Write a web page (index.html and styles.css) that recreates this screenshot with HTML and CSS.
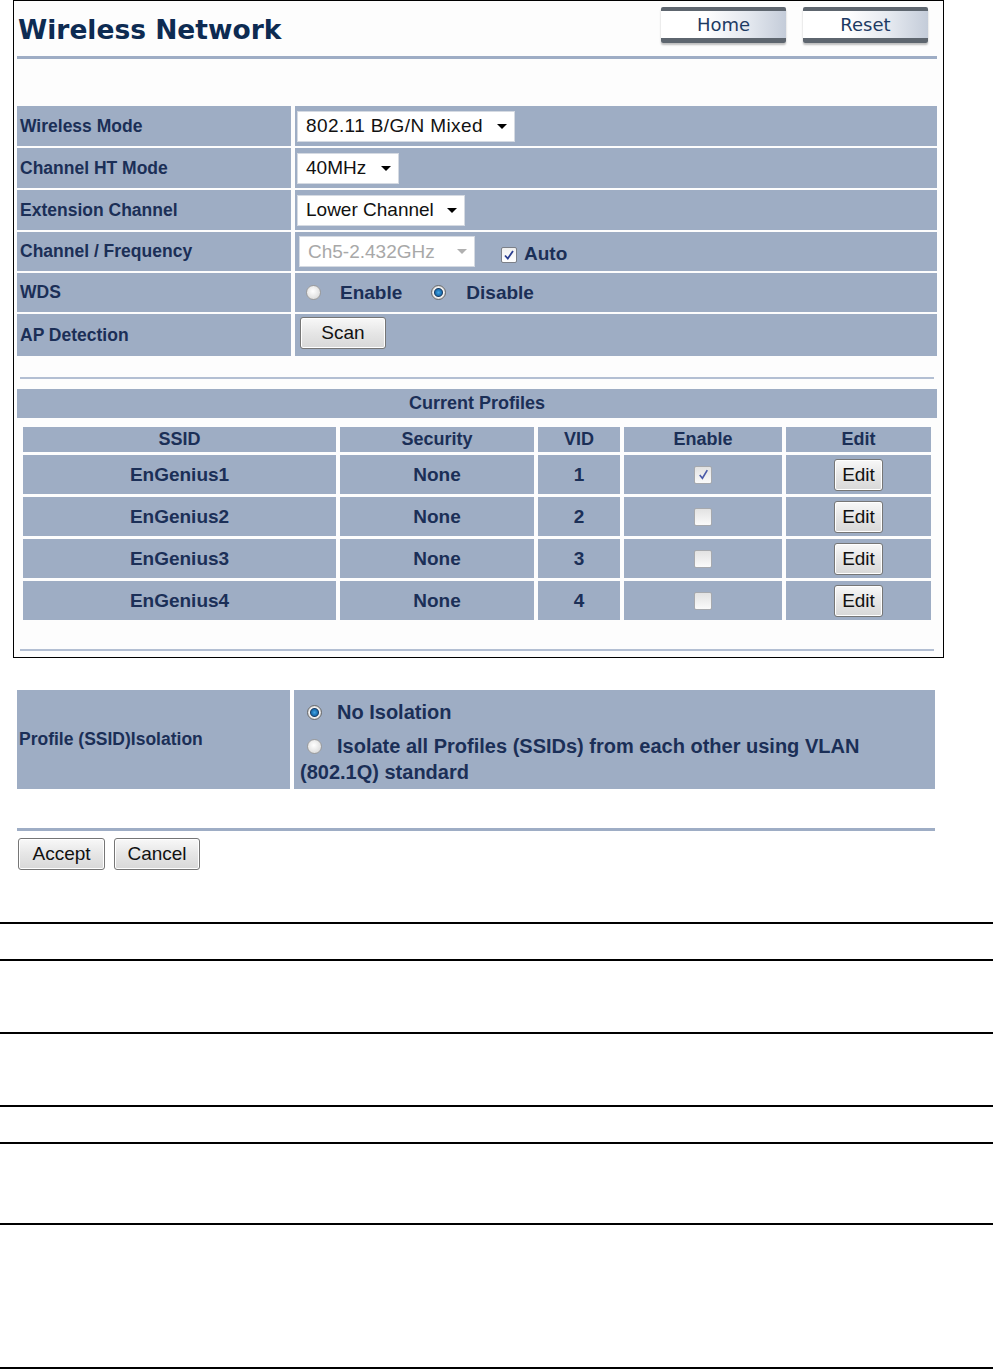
FILE: index.html
```html
<!DOCTYPE html>
<html lang="en">
<head>
  <meta charset="UTF-8">
  <title>Wireless Network</title>
  <link rel="stylesheet" href="styles.css">
</head>
<body>
  <div class="panel">
    <div class="panel-head">
      <h1>Wireless Network</h1>
      <div class="nav-btns">
        <a class="nav-btn" href="#">Home</a>
        <a class="nav-btn" href="#">Reset</a>
      </div>
    </div>
    <div class="blue-line"></div>

    <div class="form-grid">
      <div class="lbl">Wireless Mode</div>
      <div class="val"><span class="select sel-mode">802.11 B/G/N Mixed<i class="caret"></i></span></div>

      <div class="lbl">Channel HT Mode</div>
      <div class="val"><span class="select sel-ht">40MHz<i class="caret"></i></span></div>

      <div class="lbl">Extension Channel</div>
      <div class="val"><span class="select sel-ext">Lower Channel<i class="caret"></i></span></div>

      <div class="lbl">Channel / Frequency</div>
      <div class="val">
        <span class="select sel-freq disabled">Ch5-2.432GHz<i class="caret"></i></span>
        <span class="check small on"><svg width="12" height="12" viewBox="0 0 12 12"><path d="M2 6.5 L4.8 9.5 L10 2" fill="none" stroke="#2a3d8f" stroke-width="1.8"/></svg></span>
        <b class="opt auto">Auto</b>
      </div>

      <div class="lbl">WDS</div>
      <div class="val">
        <span class="radio wds-first"></span><b class="opt">Enable</b>
        <span class="radio on wds-second"></span><b class="opt">Disable</b>
      </div>

      <div class="lbl">AP Detection</div>
      <div class="val"><button type="button" class="btn scan-btn">Scan</button></div>
    </div>

    <div class="thin-line"></div>
    <div class="profiles-title">Current Profiles</div>

    <div class="profiles">
      <div class="th">SSID</div><div class="th">Security</div><div class="th">VID</div><div class="th">Enable</div><div class="th">Edit</div>

      <div class="td">EnGenius1</div><div class="td">None</div><div class="td">1</div>
      <div class="td"><span class="check on"><svg width="13" height="13" viewBox="0 0 12 12"><path d="M2.5 6.5 L5 9.5 L9.5 2" fill="none" stroke="#4a5aa8" stroke-width="1.5"/></svg></span></div>
      <div class="td"><button type="button" class="btn edit-btn">Edit</button></div>

      <div class="td">EnGenius2</div><div class="td">None</div><div class="td">2</div>
      <div class="td"><span class="check"></span></div>
      <div class="td"><button type="button" class="btn edit-btn">Edit</button></div>

      <div class="td">EnGenius3</div><div class="td">None</div><div class="td">3</div>
      <div class="td"><span class="check"></span></div>
      <div class="td"><button type="button" class="btn edit-btn">Edit</button></div>

      <div class="td">EnGenius4</div><div class="td">None</div><div class="td">4</div>
      <div class="td"><span class="check"></span></div>
      <div class="td"><button type="button" class="btn edit-btn">Edit</button></div>
    </div>

    <div class="thin-line bottom"></div>
  </div>

  <div class="iso-section">
    <div class="iso-grid">
      <div class="lbl">Profile (SSID)Isolation</div>
      <div class="val iso-val">
        <div class="iso-item"><span class="radio on"></span>No Isolation</div>
        <div class="iso-item"><span class="radio"></span>Isolate all Profiles (SSIDs) from each other using VLAN (802.1Q) standard</div>
      </div>
    </div>
    <div class="blue-line iso-line"></div>
    <div class="actions">
      <button type="button" class="btn accept-btn">Accept</button>
      <button type="button" class="btn cancel-btn">Cancel</button>
    </div>
  </div>

  <div class="doc-rows">
    <div class="doc-row r1"></div>
    <div class="doc-row r2"></div>
    <div class="doc-row r2"></div>
    <div class="doc-row r1"></div>
    <div class="doc-row r3"></div>
    <div class="doc-row r4"></div>
  </div>
</body>
</html>
```

FILE: styles.css
```css
body { margin: 0; background: #fff; font-family: "Liberation Sans", Arial, sans-serif; color: #1b2f57; }

/* main panel */
.panel { margin-left: 13px; width: 920px; border: 1px solid #000; padding: 0 6px 6px 3px; background: #fdfdfd; }
.panel-head { display: flex; justify-content: space-between; align-items: flex-start; height: 55px; }
h1 { margin: 13px 0 0 1px; font-family: "DejaVu Sans", Verdana, sans-serif; font-weight: bold; font-size: 26.5px; color: #0d2b52; }
.nav-btns { display: flex; gap: 17px; margin: 6px 9px 0 0; }
.nav-btn { display: flex; align-items: center; justify-content: center; width: 125px; height: 27px; border-top: 4px solid #5e666f; border-bottom: 5px solid #5e666f; border-radius: 2px; background: linear-gradient(to right, #fff 35%, #e4e8ef 70%, #c4ccd9); box-shadow: 0 2px 2px rgba(0,0,0,0.25); color: #1d3a63; font-family: "DejaVu Sans", sans-serif; font-size: 18px; text-decoration: none; }

.blue-line { height: 3px; background: #9eadc5; }
.thin-line { height: 2px; background: #b3bfd3; margin: 21px 3px 0 3px; }
.thin-line.bottom { margin-top: 29px; }

/* settings rows */
.form-grid { display: grid; grid-template-columns: 274px 642px; grid-template-rows: 40px 40px 40px 39px 39px 42px; gap: 2px 4px; margin-top: 47px; }
.lbl { background: #9eadc4; display: flex; align-items: center; padding-left: 3px; font-weight: bold; font-size: 17.5px; color: #1b2f57; }
.val { background: #9eadc4; display: flex; align-items: center; padding-left: 2px; }
.opt { font-size: 19px; font-weight: bold; color: #1b2f57; }
.opt.auto { margin-top: 4px; }

.select { display: inline-flex; align-items: center; justify-content: space-between; box-sizing: border-box; height: 31px; padding: 0 7px 0 8px; background: #fff; border: 1px solid #d5dae2; font-size: 19px; color: #111; }
.select.disabled { color: #a8a8a8; }
.sel-mode { width: 218px; letter-spacing: 0.4px; }
.sel-ht { width: 102px; }
.sel-ext { width: 168px; }
.sel-freq { width: 176px; margin-left: 2px; }
.caret { width: 0; height: 0; border-left: 5px solid transparent; border-right: 5px solid transparent; border-top: 5px solid #000; margin-left: 12px; }
.disabled .caret { border-top-color: #b0b0b0; }

.check { display: inline-flex; align-items: center; justify-content: center; box-sizing: border-box; width: 18px; height: 18px; border: 1px solid #a6a9ae; border-radius: 2px; background: linear-gradient(#e2e2e2, #fafafa); }
.check.small { width: 16px; height: 16px; border-color: #7c8088; margin: 6px 7px 0 26px; background: linear-gradient(#f0f0f0, #ffffff); }

.radio { display: inline-block; box-sizing: border-box; width: 15px; height: 15px; border-radius: 50%; border: 1px solid #9b9b9b; background: radial-gradient(circle at 45% 40%, #ffffff, #d2d2d2); vertical-align: -1px; }
.radio.on { border-color: #6b6b6b; background: radial-gradient(circle, #45a6e6 0, #1a6fb0 3px, #1d3f66 4px, #f2f2f2 5px, #cfcfcf 7px); }
.wds-first { margin: 0 19px 0 9px; }
.wds-second { margin: 0 20px 0 29px; }

.btn { font-family: "Liberation Sans", Arial, sans-serif; font-size: 19px; color: #111; background: linear-gradient(#f8f8f8, #e6e6e6 50%, #d8d8d8); border: 1px solid #767676; border-radius: 3px; padding: 0; cursor: pointer; box-shadow: inset 0 0 0 1px #fff; }
.scan-btn { width: 86px; height: 32px; margin-left: 3px; margin-top: -4px; }

/* profiles table */
.profiles-title { margin-top: 10px; height: 29px; background: #9eadc4; display: flex; align-items: center; justify-content: center; font-weight: bold; font-size: 18px; }
.profiles { display: grid; grid-template-columns: 313px 194px 82px 158px 145px; grid-template-rows: 25px repeat(4, 39px); gap: 3px 4px; margin: 9px 0 0 6px; }
.th, .td { background: #9eadc4; display: flex; align-items: center; justify-content: center; font-weight: bold; }
.th { font-size: 18px; }
.td { font-size: 19px; }
.edit-btn { width: 49px; height: 32px; font-weight: normal; }

/* isolation block */
.iso-section { margin: 32px 0 0 17px; width: 918px; }
.iso-grid { display: grid; grid-template-columns: 273px 641px; gap: 4px; height: 99px; }
.iso-grid .lbl { padding-left: 2px; }
.iso-val { display: block; padding: 9px 30px 0 6px; font-size: 20px; font-weight: bold; line-height: 26px; }
.iso-item + .iso-item { margin-top: 8px; }
.iso-val .radio { margin: 0 15px 0 7px; }
.iso-line { margin-top: 39px; }
.actions { display: flex; gap: 9px; margin: 7px 0 0 1px; }
.accept-btn { width: 87px; height: 32px; }
.cancel-btn { width: 86px; height: 32px; }

/* ruled lines below */
.doc-rows { margin-top: 52px; width: 993px; border-bottom: 2px solid #000; }
.doc-row { border-top: 2px solid #000; box-sizing: border-box; }
.r1 { height: 37px; }
.r2 { height: 73px; }
.r3 { height: 81px; }
.r4 { height: 144px; }
```
